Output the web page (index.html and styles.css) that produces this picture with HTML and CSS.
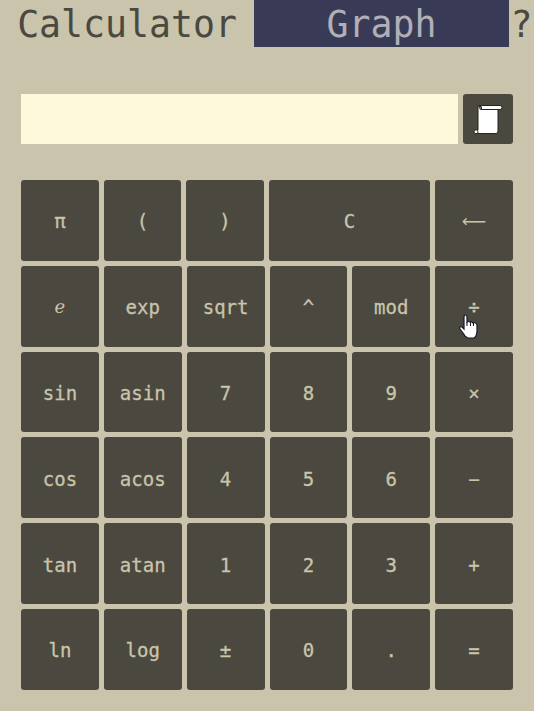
FILE: index.html
```html
<!DOCTYPE html>
<html lang="en"><head><meta charset="utf-8"><title>Calculator</title><link rel="stylesheet" href="styles.css"></head>
<body>
<nav class="tabs"><div class="tab"><span class="label">Calculator</span></div><div class="tab graph"><span class="label">Graph</span></div><div class="help"><span class="label">?</span></div></nav>
<main>
<div class="entry"><div class="display"></div><button class="history" aria-label="History"><svg width="32" height="34" viewBox="0 0 32 34"><path d="M6 3H26V28Q26 30.500 24 30.500H5V27H6Z" fill="#fff" stroke="#25241f"/><rect x="7.500" y="2.500" width="22.500" height="4" rx="2" fill="#fff" stroke="#25241f"/><path d="M7 2.500Q10 3 9 6.500" fill="none" stroke="#25241f" stroke-width="1.500"/><circle cx="4" cy="28.800" r="2" fill="#fff" stroke="#25241f"/></svg></button></div>
<div class="row"><button><span>π</span></button><button><span>(</span></button><button><span>)</span></button><button><span>C</span></button><button><span class="arrow">⟵</span></button></div>
<div class="keys">
<button><span class="euler">ℯ</span></button><button><span>exp</span></button><button><span>sqrt</span></button><button><span>^</span></button><button><span>mod</span></button><button><span>÷</span><svg class="cursor" width="20" height="26" viewBox="0 0 20 26"><path d="M5 3Q5 1 6.500 1T8 3V8Q9 7 11 8Q12 7 14 9Q17 8 18 11V17Q18 22 15 24H9Q6 23 4 19L1 15Q0 12 3 13L5 15Z" fill="#fff" stroke="#15172b" stroke-width="1.200"/><path d="M8 8V12M11.500 8V12M14.500 9V12" stroke="#15172b"/></svg></button>
<button><span>sin</span></button><button><span>asin</span></button><button><span>7</span></button><button><span>8</span></button><button><span>9</span></button><button><span>×</span></button>
<button><span>cos</span></button><button><span>acos</span></button><button><span>4</span></button><button><span>5</span></button><button><span>6</span></button><button><span>−</span></button>
<button><span>tan</span></button><button><span>atan</span></button><button><span>1</span></button><button><span>2</span></button><button><span>3</span></button><button><span>+</span></button>
<button><span>ln</span></button><button><span>log</span></button><button><span>±</span></button><button><span>0</span></button><button><span>.</span></button><button><span>=</span></button>
</div></main></body></html>
```
FILE: styles.css
```css
*{box-sizing:border-box}
body{margin:0;height:711px;overflow:hidden;background:#c9c4ab;color:#4a483f;font-family:Consolas,"DejaVu Sans Mono",monospace}
.tabs{display:grid;grid-template-columns:254px 255px 25px;grid-template-rows:47px;height:47px;font-size:36.500px;line-height:49px;text-align:center;white-space:nowrap}
.tab{height:47px}
.graph{background:#393b56;color:#b1afb8}
main{padding:47px 21px 0}
.entry{display:flex;gap:5px;height:50px;margin-bottom:36px}
.display{width:437px;background:#fff9dc}
button{position:relative;display:flex;align-items:center;justify-content:center;border:0;padding:2px 0 0;border-radius:3px;background:#4a483f;color:#c9c4ab;font:19px/22px Consolas,"DejaVu Sans Mono",monospace;-webkit-text-stroke:.3px currentColor}
.history{width:50px}
.row{display:grid;grid-template-columns:78px 77px 78px 161px 78px;gap:5px;height:80.900px;margin-bottom:5px}
.keys{display:grid;grid-template-columns:repeat(6,1fr);grid-template-rows:repeat(5,1fr);gap:5px;height:423.800px}
.arrow{font-family:"DejaVu Sans",sans-serif;font-size:17px;-webkit-text-stroke:0}
.euler{font-family:"DejaVu Sans",sans-serif;font-size:18px;-webkit-text-stroke:0}
.cursor{position:absolute;left:24px;top:48px}
```
